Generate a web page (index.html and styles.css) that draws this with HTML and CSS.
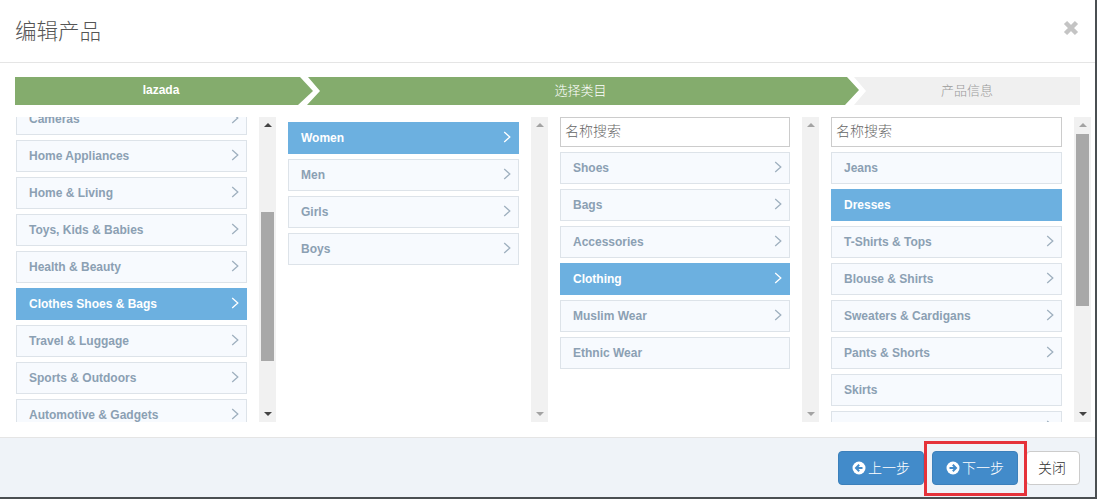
FILE: index.html
```html
<!DOCTYPE html>
<html lang="zh-CN">

<head>
    <meta charset="UTF-8">
    <title>编辑产品</title>
    <link rel="stylesheet" href="styles.css">
</head>

<body>
    <svg class="defs" width="0" height="0">
        <symbol id="chev" viewBox="0 0 8 12">
            <path d="M1.2 1 L6.8 6 L1.2 11" fill="none" stroke="currentColor" stroke-width="1.3" />
        </symbol>
    </svg>

    <div class="modal">
        <div class="modal-header">
            <h4>编辑产品</h4>
            <svg class="close-x" width="18" height="18" viewBox="0 0 18 18">
                <path d="M3.5 3.5 L14.5 14.5 M14.5 3.5 L3.5 14.5" stroke="#c4c4c4" stroke-width="4.5" />
            </svg>
        </div>

        <div class="steps">
            <div class="step step-first">lazada</div>
            <div class="step step-mid">选择类目</div>
            <div class="step step-last">产品信息</div>
        </div>

        <div class="columns">
            <div class="col">
                <div class="list">
                    <div class="items items-scrolled">
                        <div class="item">Cameras<svg class="chev"><use href="#chev" /></svg></div>
                        <div class="item">Home Appliances<svg class="chev"><use href="#chev" /></svg></div>
                        <div class="item">Home &amp; Living<svg class="chev"><use href="#chev" /></svg></div>
                        <div class="item">Toys, Kids &amp; Babies<svg class="chev"><use href="#chev" /></svg></div>
                        <div class="item">Health &amp; Beauty<svg class="chev"><use href="#chev" /></svg></div>
                        <div class="item active">Clothes Shoes &amp; Bags<svg class="chev"><use href="#chev" /></svg></div>
                        <div class="item">Travel &amp; Luggage<svg class="chev"><use href="#chev" /></svg></div>
                        <div class="item">Sports &amp; Outdoors<svg class="chev"><use href="#chev" /></svg></div>
                        <div class="item">Automotive &amp; Gadgets<svg class="chev"><use href="#chev" /></svg></div>
                    </div>
                </div>
                <div class="bar">
                    <span class="arrow up dark"></span>
                    <div class="track"><div class="thumb thumb-a"></div></div>
                    <span class="arrow down dark"></span>
                </div>
            </div>

            <div class="col">
                <div class="list">
                    <div class="items items-plain">
                        <div class="item active">Women<svg class="chev"><use href="#chev" /></svg></div>
                        <div class="item">Men<svg class="chev"><use href="#chev" /></svg></div>
                        <div class="item">Girls<svg class="chev"><use href="#chev" /></svg></div>
                        <div class="item">Boys<svg class="chev"><use href="#chev" /></svg></div>
                    </div>
                </div>
                <div class="bar">
                    <span class="arrow up"></span>
                    <div class="track"></div>
                    <span class="arrow down"></span>
                </div>
            </div>

            <div class="col col-narrow">
                <div class="list">
                    <input class="search" type="text" placeholder="名称搜索">
                    <div class="items">
                        <div class="item">Shoes<svg class="chev"><use href="#chev" /></svg></div>
                        <div class="item">Bags<svg class="chev"><use href="#chev" /></svg></div>
                        <div class="item">Accessories<svg class="chev"><use href="#chev" /></svg></div>
                        <div class="item active">Clothing<svg class="chev"><use href="#chev" /></svg></div>
                        <div class="item">Muslim Wear<svg class="chev"><use href="#chev" /></svg></div>
                        <div class="item">Ethnic Wear</div>
                    </div>
                </div>
                <div class="bar">
                    <span class="arrow up"></span>
                    <div class="track"></div>
                    <span class="arrow down"></span>
                </div>
            </div>

            <div class="col col-last">
                <div class="list">
                    <input class="search" type="text" placeholder="名称搜索">
                    <div class="items">
                        <div class="item">Jeans</div>
                        <div class="item active">Dresses</div>
                        <div class="item">T-Shirts &amp; Tops<svg class="chev"><use href="#chev" /></svg></div>
                        <div class="item">Blouse &amp; Shirts<svg class="chev"><use href="#chev" /></svg></div>
                        <div class="item">Sweaters &amp; Cardigans<svg class="chev"><use href="#chev" /></svg></div>
                        <div class="item">Pants &amp; Shorts<svg class="chev"><use href="#chev" /></svg></div>
                        <div class="item">Skirts</div>
                        <div class="item"><svg class="chev"><use href="#chev" /></svg></div>
                    </div>
                </div>
                <div class="bar">
                    <span class="arrow up"></span>
                    <div class="track"><div class="thumb thumb-b"></div></div>
                    <span class="arrow down dark"></span>
                </div>
            </div>
        </div>

        <div class="modal-footer">
            <button class="btn btn-blue">
                <svg class="circle-icon" width="14" height="14" viewBox="0 0 14 14">
                    <circle cx="7" cy="7" r="6.5" fill="#fff" />
                    <path d="M10.5 7 H4.5 M7.2 3.8 L4 7 L7.2 10.2" fill="none" stroke="#428bca" stroke-width="2" />
                </svg>上一步
            </button>
            <div class="highlight-wrap">
                <button class="btn btn-blue">
                    <svg class="circle-icon" width="14" height="14" viewBox="0 0 14 14">
                        <circle cx="7" cy="7" r="6.5" fill="#fff" />
                        <path d="M3.5 7 H9.5 M6.8 3.8 L10 7 L6.8 10.2" fill="none" stroke="#428bca" stroke-width="2" />
                    </svg>下一步
                </button>
                <div class="highlight"></div>
            </div>
            <button class="btn btn-white">关闭</button>
        </div>
    </div>
</body>

</html>
```

FILE: styles.css
```css
* {
    box-sizing: border-box;
}

html,
body {
    height: 100%;
}

body {
    margin: 0;
    overflow: hidden;
    background: #4a4f52;
    font-family: "Liberation Sans", "Noto Sans CJK SC", sans-serif;
    font-size: 13px;
}

.defs {
    position: absolute;
}

.modal {
    width: 1095px;
    height: 497px;
    background: #fff;
}

.modal-header {
    height: 63px;
    padding: 0 15px;
    display: flex;
    align-items: center;
    justify-content: space-between;
    border-bottom: 1px solid #e5e5e5;
}

.modal-header h4 {
    margin: 0 0 3px;
    font-size: 21.5px;
    font-weight: 300;
    color: #555;
}

.close-x {
    margin: 0 0 6px 0;
}

/* steps bar */
.steps {
    display: flex;
    height: 28px;
    margin: 14px 15px 0;
    font-size: 13px;
    line-height: 27px;
    text-align: center;
}

.step-first {
    flex: none;
    width: 299px;
    padding-right: 7px;
    background: #84ac6d;
    color: #fff;
    font-size: 12px;
    font-weight: bold;
    clip-path: polygon(0 0, 285px 0, 298px 14px, 283px 100%, 0 100%);
}

.step-mid {
    flex: none;
    width: 553px;
    margin-left: -7px;
    padding-right: 6px;
    background: #84ac6d;
    color: #fff;
    font-weight: 300;
    clip-path: polygon(1px 0, 540px 0, 552px 13px, 538px 100%, 0 100%, 13px 14px);
}

.step-last {
    flex: 1;
    margin-left: -6px;
    background: #f0f0f0;
    color: #999;
    font-weight: 300;
    clip-path: polygon(0 0, 100% 0, 100% 100%, 0 100%, 12px 14px);
}

/* category columns */
.columns {
    display: flex;
    height: 305px;
    margin: 12px 0 15px;
    padding-left: 16px;
}

.col {
    flex: none;
    display: flex;
    width: 272px;
}

.col-narrow {
    width: 271px;
}

.col-last {
    width: 260px;
}

.list {
    flex: none;
    width: 231px;
    height: 100%;
    overflow: hidden;
}

.col-narrow .list {
    width: 230px;
}

.items {
    display: flex;
    flex-direction: column;
    gap: 5px;
}

.items-scrolled {
    margin-top: -14px;
}

.items-plain {
    margin-top: 5px;
}

.item {
    flex: none;
    display: flex;
    align-items: center;
    justify-content: space-between;
    height: 32px;
    padding: 0 7px 0 12px;
    background: #f7fafe;
    border: 1px solid #dde3e9;
    color: #8ba0b3;
    font-size: 12px;
    font-weight: bold;
}

.item.active {
    background: #6cb0e0;
    border-color: #6cb0e0;
    color: #fff;
}

.chev {
    width: 8px;
    height: 12px;
    margin-left: auto;
    margin-bottom: 3px;
    color: #9fb0bf;
}

.active .chev {
    color: #fff;
}

.search {
    display: block;
    width: 100%;
    height: 30px;
    margin-bottom: 5px;
    padding: 0 4px 2px;
    border: 1px solid #ccc;
    outline: none;
    font: 300 14px "Liberation Sans", "Noto Sans CJK SC", sans-serif;
}

.search::placeholder {
    color: #666;
    opacity: 1;
}

/* fake scrollbars */
.bar {
    flex: none;
    display: flex;
    flex-direction: column;
    align-items: center;
    width: 17px;
    margin-left: 12px;
    background: #f1f1f1;
}

.track {
    flex: 1;
    width: 100%;
    padding: 0 2px;
}

.arrow {
    flex: none;
    width: 0;
    height: 0;
    margin: 6px 0;
    border-left: 4px solid transparent;
    border-right: 4px solid transparent;
}

.arrow.up {
    border-bottom: 4px solid #a3a3a3;
}

.arrow.down {
    border-top: 4px solid #a3a3a3;
}

.arrow.up.dark {
    border-bottom-color: #444;
}

.arrow.down.dark {
    border-top-color: #444;
}

.thumb {
    background: #a8a8a8;
}

.thumb-a {
    height: 149px;
    margin-top: 79px;
}

.thumb-b {
    height: 172px;
    margin-top: 1px;
}

/* footer */
.modal-footer {
    display: flex;
    justify-content: flex-end;
    gap: 8px;
    height: 60px;
    padding: 13px 15px 0;
    background: #eff3f8;
    border-top: 1px solid #e5e5e5;
}

.btn {
    display: flex;
    align-items: center;
    justify-content: center;
    height: 34px;
    padding: 0 0 2px;
    border-radius: 4px;
    font-family: inherit;
    font-size: 14px;
    font-weight: 300;
}

.btn-blue {
    width: 86px;
    background: #428bca;
    border: 1px solid #3c80bb;
    color: #fff;
}

.btn-white {
    width: 54px;
    padding: 0 2px 2px 0;
    background: #fff;
    border: 1px solid #ccc;
    color: #333;
}

.circle-icon {
    margin: 2px 2px 0 0;
}

.highlight-wrap {
    position: relative;
}

.highlight {
    position: absolute;
    top: -10px;
    left: -8px;
    width: 103px;
    height: 55px;
    border: 3px solid #e5323a;
}
```
